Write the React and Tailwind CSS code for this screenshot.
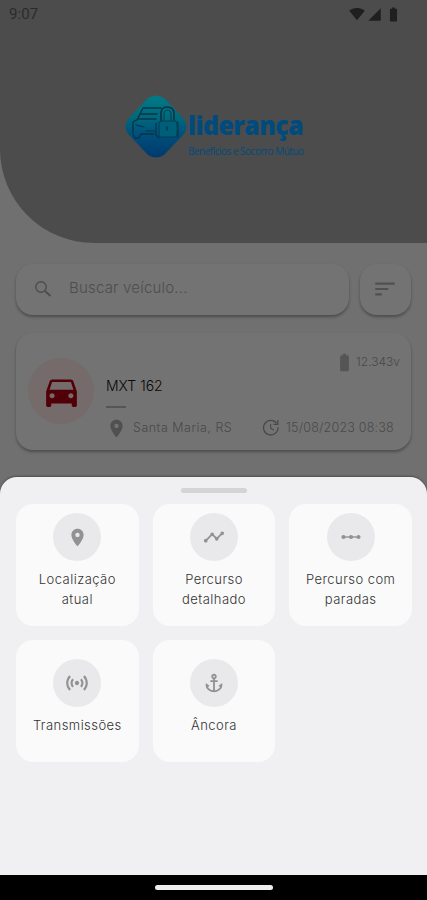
import {
  MdAnchor,
  MdBatteryFull,
  MdDirectionsCar,
  MdLocationOn,
  MdSensors,
  MdSignalCellular4Bar,
  MdSignalWifi4Bar,
  MdSort,
  MdTimeline,
} from 'react-icons/md';

const SearchIcon = () => (
  <svg width="18" height="18" viewBox="0 0 18 18" fill="none" stroke="currentColor" strokeWidth="1.4">
    <circle cx="7" cy="7" r="5.2" />
    <path d="M11 11L16.5 16" strokeWidth="1.8" />
  </svg>
);

const UpdateIcon = () => (
  <svg width="18" height="18" viewBox="0 0 18 18" fill="none" stroke="currentColor" strokeWidth="1.3">
    <path d="M14.6 4.2A7.3 7.3 0 1 0 16.1 8.2" />
    <path d="M15.8 1V5.3H11.5" />
    <path d="M8.6 5V9.3L11.8 11.2" strokeWidth="1.1" />
  </svg>
);

const StopsIcon = ({ size }) => (
  <svg width={size} height={size} viewBox="0 0 22 22" fill="currentColor">
    <circle cx="3.5" cy="11" r="2.1" />
    <circle cx="11" cy="11" r="2.1" />
    <circle cx="18.5" cy="11" r="2.1" />
    <path d="M3 10.3H19V11.7H3Z" />
  </svg>
);

const actions = [
  { id: 'location', lines: ['Localização', 'atual'], icon: MdLocationOn, size: 21 },
  { id: 'route', lines: ['Percurso', 'detalhado'], icon: MdTimeline, size: 22 },
  { id: 'stops', lines: ['Percurso com', 'paradas'], icon: StopsIcon, size: 22 },
  { id: 'broadcasts', lines: ['Transmissões'], icon: MdSensors, size: 26 },
  { id: 'anchor', lines: ['Âncora'], icon: MdAnchor, size: 22 },
];

const StatusBar = () => (
  <div className="flex h-7 items-center justify-between pl-[9px] pr-[25px] text-[#1f1f1f]">
    <span className="font-['Roboto',sans-serif] text-[15px] tracking-[0.1px] text-[#2b2b2b]">9:07</span>
    <div className="flex items-center">
      <MdSignalWifi4Bar size={16} />
      <MdSignalCellular4Bar size={15} className="ml-[2px]" />
      <MdBatteryFull size={17} className="ml-[3px]" />
    </div>
  </div>
);

const Logo = () => (
  <div className="flex items-start pl-[124px] pt-[66px]">
    <svg width="64" height="66" viewBox="0 0 64 66" fill="none">
      <defs>
        <linearGradient id="logoFill" x1="0" y1="0" x2="0" y2="1">
          <stop offset="0" stopColor="#007a86" />
          <stop offset="0.35" stopColor="#00697c" />
          <stop offset="0.65" stopColor="#004e7b" />
          <stop offset="1" stopColor="#003a6c" />
        </linearGradient>
      </defs>
      <path
        d="M24 4Q32 -1 40 4L60 25Q65 33 60 40L40 61Q32 66 24 61L4 40Q-1 33 4 25Z"
        fill="url(#logoFill)"
      />
      <g stroke="#053447" strokeWidth="1.4" strokeLinejoin="round" strokeLinecap="round">
        <path d="M13 26L19 14H37M9 28V40L11 44H15L17 40H30M9 28L14 25H32M17 20H33" />
        <path d="M12 31L20 33M22 37H31M32 29V41L35 44" strokeWidth="1.2" />
        <path d="M37 26V20Q37 13 43 13Q50 13 50 20V26" strokeWidth="1.6" />
        <path d="M40 26V21Q40 16 43.5 16Q47 16 47 21V26" strokeWidth="0.9" />
        <rect x="35" y="27" width="18" height="16" rx="2" fill="#005f78" strokeWidth="0.8" />
        <path d="M43 33V36" />
        <path d="M54 28V44" strokeWidth="1" />
      </g>
    </svg>
    <div className="flex flex-col whitespace-nowrap text-[#004b7d]">
      <span className="mt-[14px] h-[34px] origin-left scale-x-[0.92] font-['Open_Sans',sans-serif] text-[27px] leading-[34px] font-extrabold tracking-[-0.6px]">
        liderança
      </span>
      <span className="mt-[2px] font-['Open_Sans',sans-serif] text-[10px] leading-[14px] tracking-[-0.5px]">
        Benefícios e Socorro Mútuo
      </span>
    </div>
  </div>
);

const SearchRow = () => (
  <div className="flex gap-[11px]">
    <div className="flex h-[51px] w-[333px] items-center rounded-[17px] bg-[#737373] pb-[2px] pl-[18px] text-[#4d4d4d] shadow-[0_2px_3px_rgba(0,0,0,0.32)]">
      <SearchIcon />
      <span className="ml-[17px] text-[15px] font-light tracking-[0.2px]">Buscar veículo...</span>
    </div>
    <div className="flex size-[51px] items-center justify-center rounded-[17px] bg-[#737373] pr-[1px] pb-[2px] text-[#515151] shadow-[0_2px_3px_rgba(0,0,0,0.32)]">
      <MdSort size={26} />
    </div>
  </div>
);

const VehicleCard = () => (
  <div className="mt-[18px] flex h-[117px] rounded-[17px] bg-[#737373] shadow-[0_2px_3px_rgba(0,0,0,0.32)]">
    <div className="mt-[25px] ml-[12px] flex size-[66px] shrink-0 items-center justify-center rounded-full bg-[#756b6b] text-[#520008]">
      <MdDirectionsCar size={41} />
    </div>
    <div className="ml-[12px] flex flex-1 flex-col text-[#494949]">
      <div className="mt-[19px] flex h-[20px] items-center justify-end pr-[11px]">
        <MdBatteryFull size={21} className="text-[#555]" />
        <span className="ml-[1px] text-[12px] font-light">12.343v</span>
      </div>
      <span className="mt-[4px] h-[20px] text-[14px] leading-[20px] font-light text-[#090909]">MXT 162</span>
      <div className="mt-[10px] h-[2px] w-[20px] bg-[#555]" />
      <div className="mt-[9px] flex h-[22px] items-center whitespace-nowrap">
        <MdLocationOn size={21} className="shrink-0 text-[#505050]" />
        <span className="ml-[6px] w-[129px] text-[12.5px] font-light tracking-[0.5px]">Santa Maria, RS</span>
        <UpdateIcon />
        <span className="ml-[6px] text-[12.5px] font-light tracking-[0.2px]">15/08/2023 08:38</span>
      </div>
    </div>
  </div>
);

const ActionCard = ({ lines, icon: Icon, size }) => (
  <div className={`flex h-[122px] flex-col items-center rounded-[17px] bg-[#fafafa] ${lines.length > 1 ? 'pt-[9px]' : 'pt-[19px]'}`}>
    <div className="flex size-[48px] items-center justify-center rounded-full bg-[#e9e9eb] text-[#929294]">
      <Icon size={size} />
    </div>
    <div className="mt-[8px] text-center text-[13px] leading-[20px] font-light tracking-[0.45px] whitespace-nowrap text-[#333]">
      {lines.map((line) => (
        <div key={line}>{line}</div>
      ))}
    </div>
  </div>
);

const App = () => {
  return (
    <div className="flex h-[900px] w-[427px] flex-col overflow-hidden bg-[#707070] font-['Inter',sans-serif]">
      <header className="h-[243px] shrink-0 rounded-bl-[94px] bg-[#4c4c4c]">
        <StatusBar />
        <Logo />
      </header>

      <main className="h-[234px] shrink-0 px-4 pt-[21px]">
        <SearchRow />
        <VehicleCard />
      </main>

      {/* Bottom sheet */}
      <section className="flex flex-1 flex-col rounded-t-[17px] bg-[#f0f0f3] pt-[11px] shadow-[0_-1px_2px_rgba(0,0,0,0.3)]">
        <div className="h-[5px] w-[66px] self-center rounded-full bg-[#d4d4d6]" />
        <div className="mt-[11px] grid grid-cols-3 gap-[14px] pr-[15px] pl-4">
          {actions.map((action) => (
            <ActionCard key={action.id} lines={action.lines} icon={action.icon} size={action.size} />
          ))}
        </div>
      </section>

      <footer className="flex h-[25px] shrink-0 justify-center bg-black pt-[10px]">
        <div className="h-[5px] w-[118px] rounded-full bg-[#eee]" />
      </footer>
    </div>
  );
};

export default App;
